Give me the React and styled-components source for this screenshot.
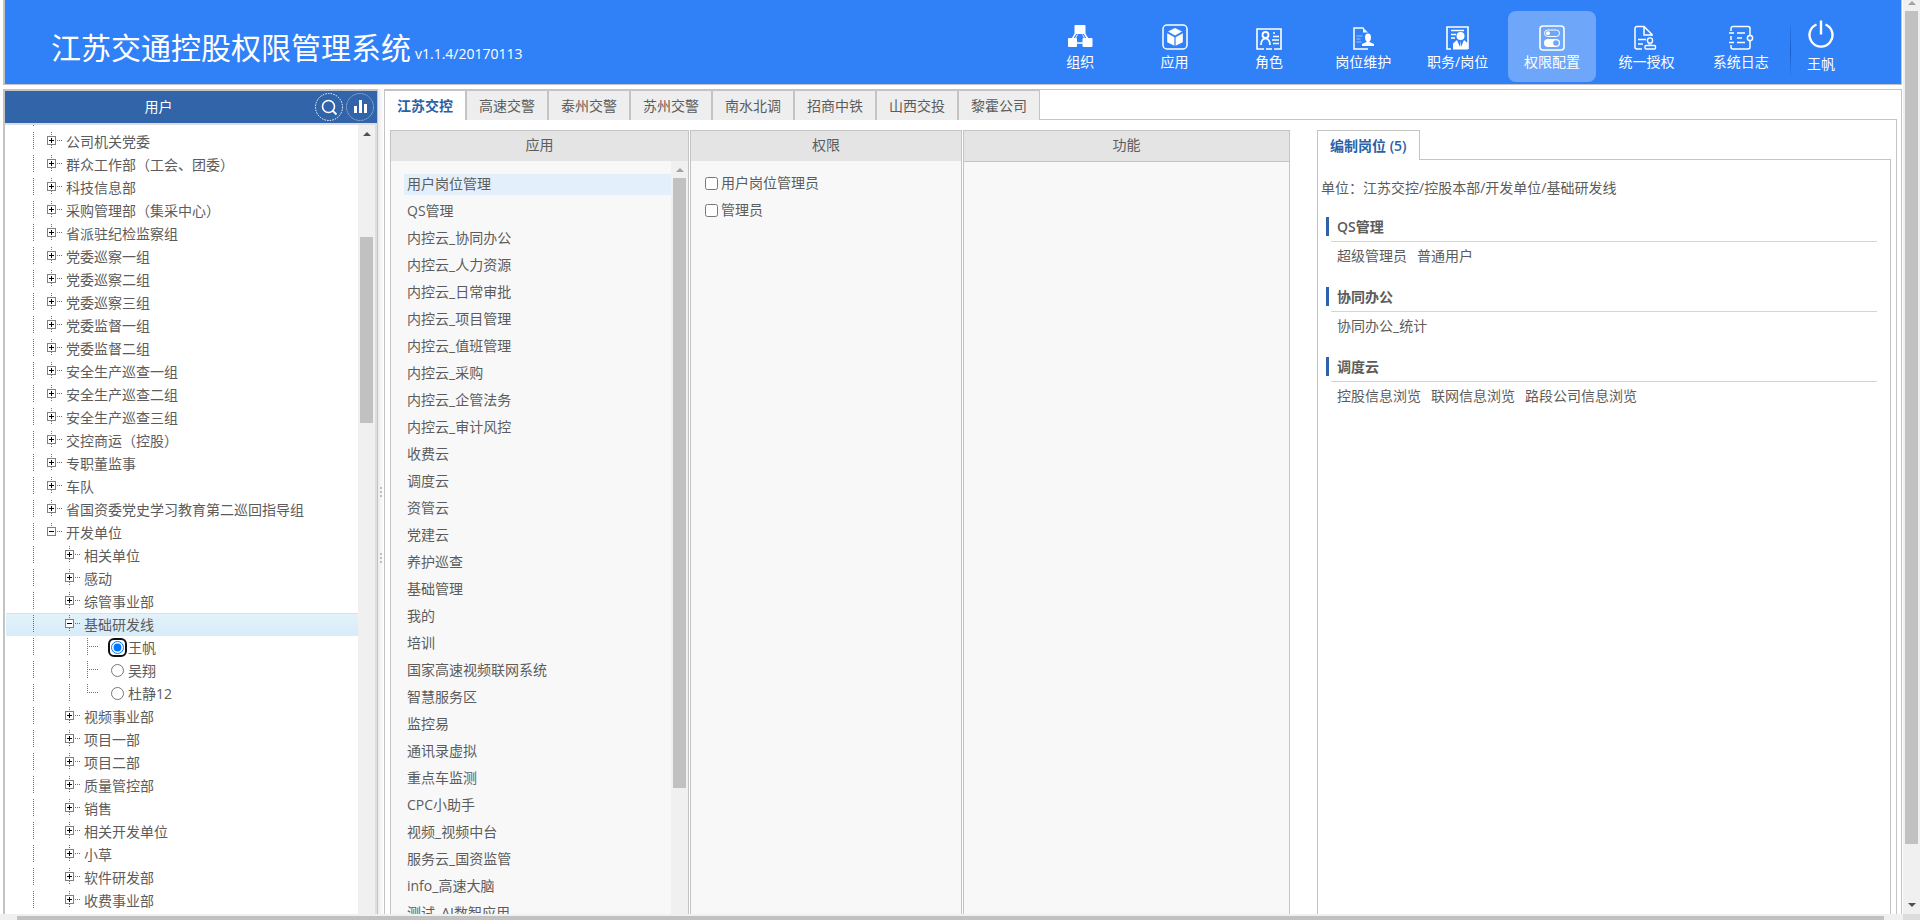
import React, { useState } from 'react';
import styled, { createGlobalStyle, css } from 'styled-components';

const GlobalStyle = createGlobalStyle`
  * {
    box-sizing: border-box;
  }
  body {
    margin: 0;
    background: #ffffff;
    color: #5c5c5c;
    font-family: 'Open Sans', 'Noto Sans CJK SC', sans-serif;
    font-size: 14px;
    line-height: 20px;
  }
  button {
    margin: 0;
    padding: 0;
    border: 0;
    background: none;
    color: inherit;
    font: inherit;
    cursor: pointer;
  }
  ul {
    margin: 0;
    padding: 0;
    list-style: none;
  }
  h1, h2, h3, p {
    margin: 0;
    font: inherit;
  }
`;

const line = '#c4c4c4';

const Page = styled.div`
  display: flex;
  flex-direction: column;
  height: 100vh;
  overflow: hidden;
`;

const PageBody = styled.div`
  display: flex;
  flex: 1;
  min-height: 0;
`;

const Screen = styled.div`
  display: flex;
  flex-direction: column;
  gap: 4px;
  flex: 1;
  min-width: 0;
  padding: 0 1px 0 3px;
`;

const Header = styled.header`
  display: flex;
  align-items: flex-start;
  background: #3080f8;
  border: 1px solid ${line};
  border-width: 0 1px 1px 2px;
`;

const Brand = styled.div`
  display: flex;
  flex: 1;
  align-items: baseline;
  gap: 4px;
  padding: 23px 0 0 46px;
  color: #ffffff;
  white-space: nowrap;
`;

const Title = styled.h1`
  font-size: 30px;
  line-height: 50px;
`;

const Nav = styled.nav`
  display: flex;
  width: 755px;
`;

const NavButton = styled.button`
  display: flex;
  flex: 1;
  flex-direction: column;
  align-items: center;
  height: 71px;
  margin: 11px 3px 2px;
  padding-top: 13px;
  border-radius: 8px;
  color: #ffffff;
  white-space: nowrap;
  background: ${props => (props.$active ? '#6ea6fa' : 'transparent')};
`;

const Divider = styled.div`
  width: 1px;
  height: 60px;
  margin: 20px 0 0 2px;
  background: linear-gradient(#3080f8, #1a5fc8, #3080f8);
`;

const UserButton = styled.button`
  display: flex;
  flex-direction: column;
  align-items: center;
  gap: 4px;
  width: 60px;
  margin-right: 50px;
  padding-top: 20px;
  color: #ffffff;
`;

const Workspace = styled.div`
  display: flex;
  flex: 1;
  min-height: 0;
`;

const Sidebar = styled.aside`
  display: flex;
  flex-direction: column;
  width: 375px;
  border: 2px solid ${line};
  border-width: 2px 1px 0 2px;
`;

const SidebarHead = styled.div`
  display: flex;
  align-items: center;
  gap: 3px;
  height: 32px;
  padding-right: 3px;
  background: #3164a9;
  color: #ffffff;
`;

const SidebarTitle = styled.h2`
  flex: 1;
  text-align: center;
`;

const RoundButton = styled.button`
  display: flex;
  width: 28px;
  height: 28px;
`;

const SidebarBody = styled.div`
  display: flex;
  flex: 1;
  min-height: 0;
  border: 2px solid #dddde2;
  border-width: 2px 2px 0 0;
`;

const Tree = styled.ul`
  flex: 1;
  min-width: 0;
  padding-left: 1px;
  overflow: hidden;
`;

// the tree is scrolled, so its first row is partly hidden
const TreeRow = styled.li`
  display: flex;
  height: 23px;
  padding-left: 18px;
  line-height: 23px;
  white-space: nowrap;
  &:first-child {
    margin-top: -18px;
  }
  ${props =>
    props.$selected &&
    css`
      background: linear-gradient(#e3f2fb, #d6ecf8);
      box-shadow: inset 0 1px #c8e5f2;
    `}
`;

const TreeText = styled.label`
  display: flex;
  align-items: center;
`;

const RadioRing = styled.span`
  display: flex;
  margin: 0 1px 0 5px;
  padding: 1px;
  border: 2px solid ${props => (props.$on ? '#101010' : 'transparent')};
  border-radius: 6px;
  background: #ffffff;
`;

const Radio = styled.input`
  width: 13px;
  height: 13px;
  margin: 0;
`;

const Splitter = styled.div`
  display: flex;
  flex-direction: column;
  align-items: center;
  gap: 56px;
  width: 6px;
  padding-top: 398px;
  background: linear-gradient(to right, #ececec, #ffffff);
`;

const Grip = styled.div`
  width: 2px;
  height: 10px;
  background: repeating-linear-gradient(#c0c0c0 0 2px, transparent 2px 4px);
`;

const Main = styled.main`
  display: flex;
  flex: 1;
  flex-direction: column;
  min-width: 0;
  padding-right: 4px;
  border: 1px solid ${line};
  border-bottom: 0;
`;

const TabBar = styled.div`
  display: flex;
  height: 30px;
`;

const Tab = styled.button`
  padding: 0 12px;
  border: 1px solid ${line};
  border-bottom: 0;
  background: #eeeeee;
  &:first-child {
    border-left: 0;
  }
  ${props =>
    props.$active &&
    css`
      background: #ffffff;
      color: #2b5fa8;
      font-weight: 600;
    `}
`;

const TabLine = styled.div`
  flex: 1;
  border-bottom: 1px solid ${line};
`;

const TabContent = styled.div`
  display: grid;
  flex: 1;
  grid-template-columns: 299fr 272fr 327fr 600fr;
  column-gap: 1px;
  min-height: 0;
  padding: 10px 5px 0;
  border-right: 1px solid ${line};
`;

const Panel = styled.section`
  display: flex;
  flex-direction: column;
  min-width: 0;
  min-height: 0;
  border: 1px solid ${line};
  border-bottom: 0;
  background: #f8f8f8;
`;

const PanelTitle = styled.h2`
  flex: none;
  padding-bottom: 2px;
  background: #e4e4e4;
  line-height: 28px;
  text-align: center;
`;

const PanelBody = styled.div`
  display: flex;
  flex: 1;
  min-height: 0;
  border-top: ${props => (props.$lined ? `1px solid ${line}` : '0')};
`;

const AppList = styled.ul`
  display: flex;
  flex: 1;
  flex-direction: column;
  gap: 6px;
  padding: 13px 0 0 13px;
  overflow: hidden;
`;

const AppButton = styled.button`
  display: block;
  width: 100%;
  padding: 0 0 2px 3px;
  line-height: 19px;
  text-align: left;
  white-space: nowrap;
  background: ${props => (props.$active ? '#e3f0fc' : 'transparent')};
`;

const CheckList = styled.div`
  display: flex;
  flex-direction: column;
  gap: 7px;
  padding: 12px 14px;
`;

const CheckLabel = styled.label`
  display: flex;
  align-items: center;
  gap: 3px;
`;

const Check = styled.input`
  width: 13px;
  height: 13px;
  margin: 0;
`;

const PostPanel = styled.section`
  display: flex;
  flex-direction: column;
  min-width: 0;
  margin-left: 26px;
`;

const PostTab = styled(Tab)`
  &:first-child {
    border-left: 1px solid ${line};
  }
`;

const PostBody = styled.div`
  flex: 1;
  padding: 18px 13px 0 3px;
  border: 1px solid ${line};
  border-width: 0 1px;
`;

const Group = styled.div`
  margin: 19px 0 0 5px;
  & + & {
    margin-top: 20px;
  }
`;

const GroupTitle = styled.h3`
  padding-left: 8px;
  border-left: 3px solid #2f62ad;
  font-weight: 600;
  line-height: 19px;
`;

const GroupItems = styled.div`
  display: flex;
  gap: 10px;
  margin: 5px 0 0 5px;
  padding: 4px 0 1px 6px;
  border-top: 1px solid #d4d4d4;
  white-space: nowrap;
`;

const Track = styled.div`
  position: relative;
  flex: none;
  width: 17px;
  background: #f0f0f0;
`;

const Thumb = styled.div`
  width: 13px;
  margin: ${props => props.$start}px 2px 0;
  height: ${props => props.$length}px;
  background: #c1c1c1;
`;

const Arrow = styled.span`
  position: absolute;
  left: 5px;
  ${props => (props.$down ? 'bottom: 7px' : `top: ${props.$top}px`)};
  border: 4px solid transparent;
  border-width: ${props => (props.$down ? '4px 4px 0' : '0 4px 4px')};
  border-color: ${props => props.$color || '#505050'} transparent;
`;

const BottomTrack = styled.div`
  flex: none;
  height: 6px;
  padding: 2px 36px 0 17px;
  background: linear-gradient(to left, #dcdcdc 17px, #f0f0f0 17px);
`;

const BottomThumb = styled.div`
  height: 4px;
  background: #c1c1c1;
`;

const icons = {
  org: (
    <>
      <g fill="#fff" stroke="none">
        <rect x="7.500" y="1" width="11" height="9" rx="1" />
        <rect x="1" y="14" width="9" height="9" rx="1" />
        <rect x="15.500" y="14" width="10" height="9" rx="1" />
      </g>
      <path d="M8.500 9.500L5.500 14.500M17.500 9.500L20.500 14.500M10 19H16" strokeWidth="1.500" />
      <path d="M10.500 10.500l-2 3.500M15.500 10.500l2 3.500" />
    </>
  ),
  app: (
    <>
      <rect x="1" y="1" width="24" height="24" rx="4" strokeWidth="1.500" />
      <g fill="#fff" stroke="none">
        <path d="M13 4l7 3.600-7 4-7-4z" />
        <path d="M5.200 9.200l7.200 4v8.600l-7.200-3.600z" />
        <path d="M20.800 9.200l-7.200 4v8.600l7.200-3.600z" />
      </g>
    </>
  ),
  role: (
    <>
      <path d="M8 25H1V5h24v20h-7M10 25h6" strokeWidth="1.600" />
      <circle cx="9.500" cy="11" r="3" strokeWidth="1.800" />
      <path d="M5 21c0-4 2-6.500 4.500-6.500S14 17 14 21" strokeWidth="1.800" />
      <path d="M17 9h2M17 12.500h6M16 16h7M17 19.500h6" strokeWidth="1.300" />
    </>
  ),
  post: (
    <>
      <path d="M18 25h-14V4h9.500" strokeWidth="1.500" />
      <path d="M13 3.500l5 5h-5z" fill="#fff" stroke="none" />
      <path d="M6.500 12h6M6.500 15h4M6.500 18h5" stroke="#9dc3fb" />
      <g fill="#fff" stroke="none">
        <ellipse cx="18" cy="13.500" rx="3" ry="4" />
        <path d="M16.500 16h3v2l4.500 2v2H12v-2l4.500-2z" />
      </g>
    </>
  ),
  duty: (
    <>
      <path d="M6 25H2V3h21v22" strokeWidth="1.600" />
      <path d="M6 6.500h13M6 10.500h5M6 14h4" strokeWidth="1.500" />
      <g fill="#fff" stroke="none">
        <circle cx="15.500" cy="12" r="4" />
        <path d="M8 25.500v-6l4-3.500 3 7 .5-7 .5 7 3-7 4 3.500v6z" />
      </g>
    </>
  ),
  config: (
    <>
      <rect x="1" y="2" width="24" height="24" rx="3" strokeWidth="1.600" />
      <rect x="5.500" y="6" width="15" height="6.500" rx="3.200" />
      <circle cx="9" cy="9.200" r="2" fill="#fff" stroke="none" />
      <rect x="5" y="15" width="16" height="8" rx="4" fill="#fff" stroke="none" />
      <circle cx="17" cy="19" r="2.800" fill="#6ea6fa" stroke="none" />
    </>
  ),
  auth: (
    <>
      <path d="M9 25H4a2 2 0 0 1-2-2V4.500a2 2 0 0 1 2-2h7l8 8V12M11 3v8h8" strokeWidth="1.500" />
      <path d="M5 15.500h8M5 20h5" strokeWidth="1.300" />
      <circle cx="17" cy="16.500" r="2.600" strokeWidth="1.400" />
      <path d="M16 19v2.500M18 19v2.500" />
      <rect x="12" y="21.500" width="10.500" height="3.500" rx="1" strokeWidth="1.400" />
    </>
  ),
  log: (
    <>
      <path
        d="M3 7V4.500a2 2 0 0 1 2-2h15a2 2 0 0 1 2 2V11M22 17v6a2 2 0 0 1-2 2H5a2 2 0 0 1-2-2v-2M3 12v4"
        strokeWidth="1.500"
      />
      <circle cx="22" cy="14" r="2.600" strokeWidth="1.500" />
      <path d="M1 9h5M1 18.500h5M9 9h8M9 14h5M9 18.500h8" strokeWidth="1.600" />
    </>
  )
};

const NavIcon = ({ name }) => (
  <svg width="26" height="28" viewBox="0 0 26 28" fill="none" stroke="#fff" aria-hidden="true">
    {icons[name]}
  </svg>
);

const navItems = [
  { id: 'org', title: '组织' },
  { id: 'app', title: '应用' },
  { id: 'role', title: '角色' },
  { id: 'post', title: '岗位维护' },
  { id: 'duty', title: '职务/岗位' },
  { id: 'config', title: '权限配置' },
  { id: 'auth', title: '统一授权' },
  { id: 'log', title: '系统日志' }
];

const topUnits = [
  '',
  '公司机关党委',
  '群众工作部（工会、团委）',
  '科技信息部',
  '采购管理部（集采中心）',
  '省派驻纪检监察组',
  '党委巡察一组',
  '党委巡察二组',
  '党委巡察三组',
  '党委监督一组',
  '党委监督二组',
  '安全生产巡查一组',
  '安全生产巡查二组',
  '安全生产巡查三组',
  '交控商运（控股）',
  '专职董监事',
  '车队',
  '省国资委党史学习教育第二巡回指导组'
];

const treeRows = [
  ...topUnits.map(title => ({ title, level: 1, node: 'plus' })),
  { title: '开发单位', level: 1, node: 'minusLast' },
  { title: '相关单位', level: 2, node: 'plus' },
  { title: '感动', level: 2, node: 'plus' },
  { title: '综管事业部', level: 2, node: 'plus' },
  { title: '基础研发线', level: 2, node: 'minus' },
  { title: '王帆', level: 3, node: 'leaf' },
  { title: '吴翔', level: 3, node: 'leaf' },
  { title: '杜静12', level: 3, node: 'leafLast' },
  ...[
    '视频事业部',
    '项目一部',
    '项目二部',
    '质量管控部',
    '销售',
    '相关开发单位',
    '小草',
    '软件研发部',
    '收费事业部'
  ].map(title => ({ title, level: 2, node: 'plus' }))
];

const tabs = [
  '江苏交控',
  '高速交警',
  '泰州交警',
  '苏州交警',
  '南水北调',
  '招商中铁',
  '山西交投',
  '黎霍公司'
];

const apps = [
  '用户岗位管理',
  'QS管理',
  '内控云_协同办公',
  '内控云_人力资源',
  '内控云_日常审批',
  '内控云_项目管理',
  '内控云_值班管理',
  '内控云_采购',
  '内控云_企管法务',
  '内控云_审计风控',
  '收费云',
  '调度云',
  '资管云',
  '党建云',
  '养护巡查',
  '基础管理',
  '我的',
  '培训',
  '国家高速视频联网系统',
  '智慧服务区',
  '监控易',
  '通讯录虚拟',
  '重点车监测',
  'CPC小助手',
  '视频_视频中台',
  '服务云_国资监管',
  'info_高速大脑',
  '测试_AI数智应用'
];

const groups = [
  { title: 'QS管理', items: ['超级管理员', '普通用户'] },
  { title: '协同办公', items: ['协同办公_统计'] },
  { title: '调度云', items: ['控股信息浏览', '联网信息浏览', '路段公司信息浏览'] }
];

const dots = { stroke: '#707070', strokeDasharray: '1 1' };

// level 1 has no guide because its last child is open
const Guide = ({ blank }) => (
  <svg width="18" height="23" aria-hidden="true">
    {!blank && <path d="M9.500 2V19" {...dots} />}
  </svg>
);

const TreeNode = ({ node }) => {
  if (node === 'leaf' || node === 'leafLast') {
    return (
      <svg width="25" height="23" aria-hidden="true">
        <path d={node === 'leaf' ? 'M9.500 2V19' : 'M9.500 2V11'} {...dots} />
        <path d="M9 10.500H21" {...dots} />
      </svg>
    );
  }
  return (
    <button type="button" aria-label="展开">
      <svg width="24" height="23" style={{ display: 'block' }} aria-hidden="true">
        <path d="M9.500 2V6" {...dots} />
        {node !== 'minusLast' && <path d="M9.500 15V19" {...dots} />}
        <path d="M15 10.500H20" {...dots} />
        <rect x="5.500" y="6.500" width="8" height="8" fill="#fff" stroke="#808080" />
        <path d="M7 10.500H12" stroke="#000" />
        {node === 'plus' && <path d="M9.500 8V13" stroke="#000" />}
      </svg>
    </button>
  );
};

function UserTree() {
  const [user, setUser] = useState('王帆');

  return (
    <Tree>
      {treeRows.map(row => (
        <TreeRow key={row.title} $selected={row.title === '基础研发线'}>
          <Guide />
          {row.level > 1 && <Guide blank />}
          {row.level > 2 && <Guide />}
          <TreeNode node={row.node} />
          {row.level === 3 ? (
            <TreeText>
              <RadioRing $on={user === row.title}>
                <Radio
                  type="radio"
                  name="user"
                  checked={user === row.title}
                  onChange={() => setUser(row.title)}
                />
              </RadioRing>
              {row.title}
            </TreeText>
          ) : (
            <TreeText as="span">{row.title}</TreeText>
          )}
        </TreeRow>
      ))}
    </Tree>
  );
}

function App() {
  const [tab, setTab] = useState(tabs[0]);
  const [app, setApp] = useState(apps[0]);

  return (
    <Page>
      <GlobalStyle />
      <PageBody>
        <Screen>
          <Header>
            <Brand>
              <Title>江苏交通控股权限管理系统</Title>
              <span>v1.1.4/20170113</span>
            </Brand>
            <Nav>
              {navItems.map(item => (
                <NavButton key={item.id} type="button" $active={item.id === 'config'}>
                  <NavIcon name={item.id} />
                  <span>{item.title}</span>
                </NavButton>
              ))}
            </Nav>
            <Divider />
            <UserButton type="button">
              <svg width="26" height="30" viewBox="0 0 26 30" fill="none" stroke="#fff" strokeWidth="2.400" aria-hidden="true">
                <path d="M8.500 4.500a11.500 11.500 0 1 0 9 0M13 0.500v14" />
              </svg>
              <span>王帆</span>
            </UserButton>
          </Header>

          <Workspace>
            <Sidebar>
              <SidebarHead>
                <SidebarTitle>用户</SidebarTitle>
                <RoundButton type="button" aria-label="搜索">
                  <svg width="28" height="28" fill="none" stroke="#fff">
                    <circle cx="14" cy="14" r="13.500" strokeDasharray="1.500 1.200" />
                    <circle cx="13.500" cy="13.500" r="6" strokeWidth="1.600" />
                    <path d="M17.500 17.500l4 4" strokeWidth="1.800" />
                  </svg>
                </RoundButton>
                <RoundButton type="button" aria-label="统计">
                  <svg width="28" height="28" fill="none" stroke="#fff">
                    <circle cx="14" cy="14" r="13.500" stroke="#8fabd3" strokeDasharray="2 .6" />
                    <path d="M9.500 13v7M14.500 7v13M19.500 11v9" strokeWidth="3" />
                  </svg>
                </RoundButton>
              </SidebarHead>
              <SidebarBody>
                <UserTree />
                <Track>
                  <Arrow $top={7} />
                  <Thumb $start={112} $length={186} />
                </Track>
              </SidebarBody>
            </Sidebar>

            <Splitter>
              <Grip />
              <Grip />
            </Splitter>

            <Main>
              <TabBar>
                {tabs.map(title => (
                  <Tab key={title} type="button" $active={title === tab} onClick={() => setTab(title)}>
                    {title}
                  </Tab>
                ))}
                <TabLine />
              </TabBar>
              <TabContent>
                <Panel>
                  <PanelTitle>应用</PanelTitle>
                  <PanelBody>
                    <AppList>
                      {apps.map(title => (
                        <li key={title}>
                          <AppButton type="button" $active={title === app} onClick={() => setApp(title)}>
                            {title}
                          </AppButton>
                        </li>
                      ))}
                    </AppList>
                    <Track>
                      <Arrow $top={7} $color="#a3a3a3" />
                      <Thumb $start={17} $length={610} />
                    </Track>
                  </PanelBody>
                </Panel>
                <Panel>
                  <PanelTitle>权限</PanelTitle>
                  <CheckList>
                    {['用户岗位管理员', '管理员'].map(title => (
                      <CheckLabel key={title}>
                        <Check type="checkbox" />
                        {title}
                      </CheckLabel>
                    ))}
                  </CheckList>
                </Panel>
                <Panel>
                  <PanelTitle>功能</PanelTitle>
                  <PanelBody $lined />
                </Panel>
                <PostPanel>
                  <TabBar>
                    <PostTab type="button" $active>
                      编制岗位 (5)
                    </PostTab>
                    <TabLine />
                  </TabBar>
                  <PostBody>
                    <p>单位：江苏交控/控股本部/开发单位/基础研发线</p>
                    {groups.map(group => (
                      <Group key={group.title}>
                        <GroupTitle>{group.title}</GroupTitle>
                        <GroupItems>
                          {group.items.map(item => (
                            <span key={item}>{item}</span>
                          ))}
                        </GroupItems>
                      </Group>
                    ))}
                  </PostBody>
                </PostPanel>
              </TabContent>
            </Main>
          </Workspace>
        </Screen>
        <Track>
          <Arrow $top={1} $color="#a3a3a3" />
          <Thumb $start={11} $length={833} />
          <Arrow $down />
        </Track>
      </PageBody>
      <BottomTrack>
        <BottomThumb />
      </BottomTrack>
    </Page>
  );
}

export default App;
